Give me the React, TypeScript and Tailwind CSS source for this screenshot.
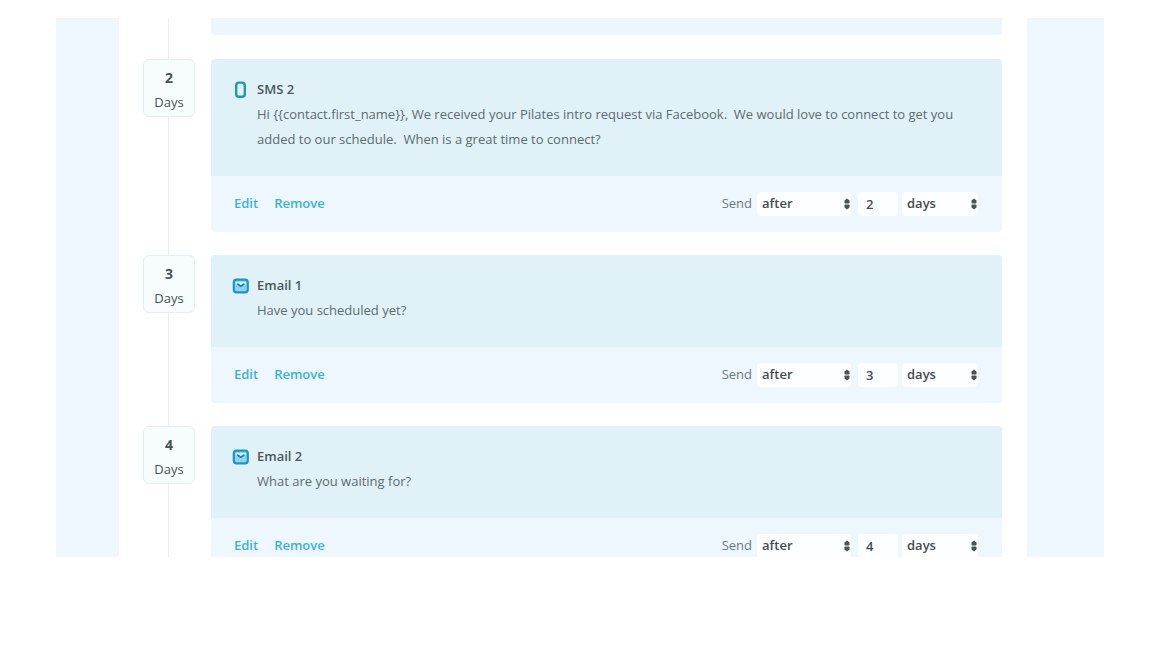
interface Step {
  id: string;
  kind: 'sms' | 'email';
  title: string;
  body: string;
  delay: number;
}

const steps: Step[] = [
  {
    id: 'sms-2',
    kind: 'sms',
    title: 'SMS 2',
    body: 'Hi {{contact.first_name}}, We received your Pilates intro request via Facebook.  We would love to connect to get you added to our schedule.  When is a great time to connect?',
    delay: 2,
  },
  { id: 'email-1', kind: 'email', title: 'Email 1', body: 'Have you scheduled yet?', delay: 3 },
  { id: 'email-2', kind: 'email', title: 'Email 2', body: 'What are you waiting for?', delay: 4 },
];

function StepIcon({ kind }: { kind: Step['kind'] }) {
  if (kind === 'sms') {
    return (
      <svg viewBox="0 0 18 18" className="w-[18px] h-[18px]" fill="none" aria-hidden="true">
        <rect x="5.2" y="1.6" width="8.6" height="14.2" rx="2.8" fill="#dff4fb" stroke="#2397b8" strokeWidth="2.4" />
      </svg>
    );
  }
  return (
    <svg viewBox="0 0 18 18" className="w-[18px] h-[18px]" fill="none" aria-hidden="true">
      <rect x="2.8" y="2.6" width="14" height="12.8" rx="2.8" fill="#8fd5f0" stroke="#1b96c4" strokeWidth="2.2" />
      <path d="M4.6 5h10.4v1.6L9.8 9.2 4.6 6.6z" fill="#d3f1fc" />
      <path d="M6.8 7.2 9.8 9.2l3-2" stroke="#1487b3" strokeWidth="1.8" strokeLinecap="round" strokeLinejoin="round" />
    </svg>
  );
}

function Arrows() {
  return (
    <svg
      viewBox="0 0 6 12"
      className="absolute right-px top-1/2 -translate-y-1/2 w-[6px] h-[12px] pointer-events-none"
      fill="#4b5355"
      aria-hidden="true"
    >
      <path d="M3 .4 5.5 2.4v2.4a.6.6 0 0 1-.6.6H1.1a.6.6 0 0 1-.6-.6V2.4z" />
      <path d="M3 11.6.5 9.6V7.2a.6.6 0 0 1 .6-.6h3.8a.6.6 0 0 1 .6.6v2.4z" />
    </svg>
  );
}

function DelayBadge({ delay }: { delay: number }) {
  return (
    <div className="relative w-[52px] h-[58px] pt-1 shrink-0 rounded-md border border-[#e3eff2] bg-[#f7fcfd] flex flex-col items-center justify-center text-[#4a5254]">
      <span className="text-sm leading-6 font-bold">{delay}</span>
      <span className="text-[13px] leading-6">Days</span>
    </div>
  );
}

function StepCard({ step }: { step: Step }) {
  return (
    <article className="flex-1 min-w-0 rounded overflow-hidden text-[13px]">
      <div className="flex gap-2 bg-[#e1f1f8] pt-[18px] pb-6 pl-5 pr-6">
        <div className="h-[25px] flex items-center shrink-0">
          <StepIcon kind={step.kind} />
        </div>
        <div className="min-w-0 leading-[25px] text-[#5c6c70]">
          <h2 className="font-semibold text-[#4a585c]">{step.title}</h2>
          <p className="whitespace-pre-wrap">{step.body}</p>
        </div>
      </div>
      <div className="flex items-center justify-between h-14 bg-[#eef7fd] pl-[23px] pr-6">
        <div className="flex gap-4 font-semibold text-[#35b4e3]">
          <button type="button">Edit</button>
          <button type="button">Remove</button>
        </div>
        <div className="flex items-center text-[#454c4e] font-semibold">
          <label htmlFor={`${step.id}-when`} className="mr-[5px] font-normal text-[#6d797d]">
            Send
          </label>
          <div className="relative mr-[7px]">
            <select
              id={`${step.id}-when`}
              defaultValue="after"
              className="appearance-none block w-[94px] h-6 pl-[5px] rounded-sm bg-[#fdfeff] outline-none"
            >
              <option value="after">after</option>
              <option value="before">before</option>
            </select>
            <Arrows />
          </div>
          <input
            type="text"
            inputMode="numeric"
            aria-label="Delay amount"
            defaultValue={step.delay}
            className="block w-10 h-6 pl-2 mr-1 rounded-sm bg-[#fdfeff] outline-none"
          />
          <div className="relative">
            <select
              aria-label="Delay unit"
              defaultValue="days"
              className="appearance-none block w-[76px] h-6 pl-[5px] rounded-sm bg-[#fdfeff] outline-none"
            >
              <option value="days">days</option>
              <option value="hours">hours</option>
            </select>
            <Arrows />
          </div>
        </div>
      </div>
    </article>
  );
}

export default function App() {
  return (
    <div className="h-screen bg-white px-14 pt-[18px] pb-[89px] font-['Open_Sans',sans-serif]">
      <div className="flex h-full overflow-hidden">
        <div className="w-[63px] shrink-0 bg-[#eef7fd]" />
        <main className="relative flex-1 min-w-0 pl-6 pr-[25px]">
          {/* timeline rail behind the badges */}
          <div className="absolute left-[49px] inset-y-0 w-px bg-[#e9eff1]" />
          <div className="ml-[68px] h-[17px] rounded-b bg-[#edf7fb]" />
          <ol className="mt-6 space-y-[23px]">
            {steps.map((step) => (
              <li key={step.id} className="flex items-start gap-4">
                <DelayBadge delay={step.delay} />
                <StepCard step={step} />
              </li>
            ))}
          </ol>
        </main>
        <div className="w-[77px] shrink-0 bg-[#eef7fd]" />
      </div>
    </div>
  );
}
